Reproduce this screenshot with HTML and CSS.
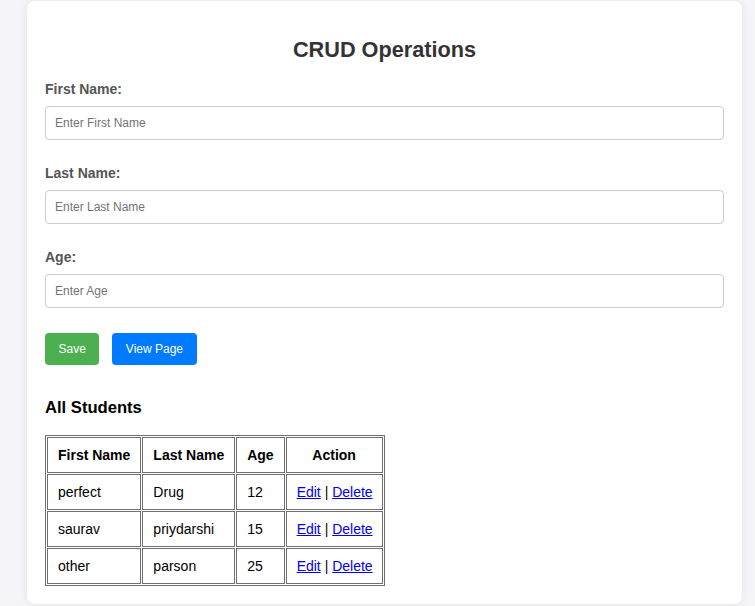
FILE: index.html
```html
<!DOCTYPE html>
<html lang="en">
<head>
<meta charset="UTF-8">
<title>CRUD Operations</title>
<link rel="stylesheet" href="styles.css">
</head>
<body>
<div class="card">
  <h2 class="title">CRUD Operations</h2>
  <form class="form">
    <div class="field">
      <label class="label" for="fn">First Name:</label>
      <input class="input" id="fn" type="text" placeholder="Enter First Name">
    </div>
    <div class="field">
      <label class="label" for="ln">Last Name:</label>
      <input class="input" id="ln" type="text" placeholder="Enter Last Name">
    </div>
    <div class="field">
      <label class="label" for="age">Age:</label>
      <input class="input" id="age" type="text" placeholder="Enter Age">
    </div>
    <div class="actions">
      <button type="button" class="btn btn-save">Save</button>
      <button type="button" class="btn btn-view">View Page</button>
    </div>
  </form>
  <h3 class="subtitle">All Students</h3>
  <table class="students">
    <thead>
      <tr><th>First Name</th><th>Last Name</th><th>Age</th><th>Action</th></tr>
    </thead>
    <tbody>
      <tr><td>perfect</td><td>Drug</td><td>12</td><td><a href="#">Edit</a> | <a href="#">Delete</a></td></tr>
      <tr><td>saurav</td><td>priydarshi</td><td>15</td><td><a href="#">Edit</a> | <a href="#">Delete</a></td></tr>
      <tr><td>other</td><td>parson</td><td>25</td><td><a href="#">Edit</a> | <a href="#">Delete</a></td></tr>
    </tbody>
  </table>
</div>
</body>
</html>
```
FILE: styles.css
```css
html, body {
  margin: 0;
  padding: 0;
}
body {
  background: #f4f4f9;
  font-family: "Liberation Sans", Arial, sans-serif;
  padding: 1px 0 0 27px;
  height: 606px;
  box-sizing: border-box;
  overflow: hidden;
}
.card {
  width: 715px;
  box-sizing: border-box;
  background: #fff;
  border-radius: 8px;
  box-shadow: 0 0 10px rgba(0, 0, 0, 0.08);
  padding: 18px;
}
.title {
  margin: 18px 0 19px;
  font-size: 21.7px;
  line-height: 25px;
  font-weight: bold;
  color: #333;
  text-align: center;
}
.form {
  margin: 0;
}
.field {
  display: flex;
  flex-direction: column;
  margin-bottom: 25px;
}
.label {
  font-size: 14px;
  line-height: 16px;
  font-weight: bold;
  color: #555;
  margin-bottom: 9px;
}
.input {
  height: 34px;
  box-sizing: border-box;
  padding: 9px 9px;
  border: 1px solid #ccc;
  border-radius: 4px;
  font-family: "Liberation Sans", Arial, sans-serif;
  font-size: 12px;
  color: #333;
  width: 100%;
}
.input::placeholder {
  color: #757575;
}
.actions {
  display: flex;
  gap: 13px;
}
.btn {
  height: 32px;
  padding: 0 13.5px;
  border: none;
  border-radius: 4px;
  color: #fff;
  font-family: "Liberation Sans", Arial, sans-serif;
  font-size: 12px;
  cursor: pointer;
}
.btn-save {
  background: #4caf50;
}
.btn-view {
  background: #007bff;
}
.subtitle {
  margin: 33px 0 18px;
  font-size: 16.6px;
  line-height: 19px;
  font-weight: bold;
  color: #000;
}
.students {
  border: 1px solid #707070;
  border-spacing: 1px;
  font-size: 14px;
  color: #000;
}
.students th,
.students td {
  border: 1px solid #707070;
  padding: 9px 10px;
  line-height: 16px;
}
.students th {
  text-align: center;
  font-weight: bold;
}
.students td {
  text-align: left;
}
.students td:last-child {
  padding-right: 9px;
}
.students a {
  color: #0000ee;
  text-decoration: underline;
}
```
